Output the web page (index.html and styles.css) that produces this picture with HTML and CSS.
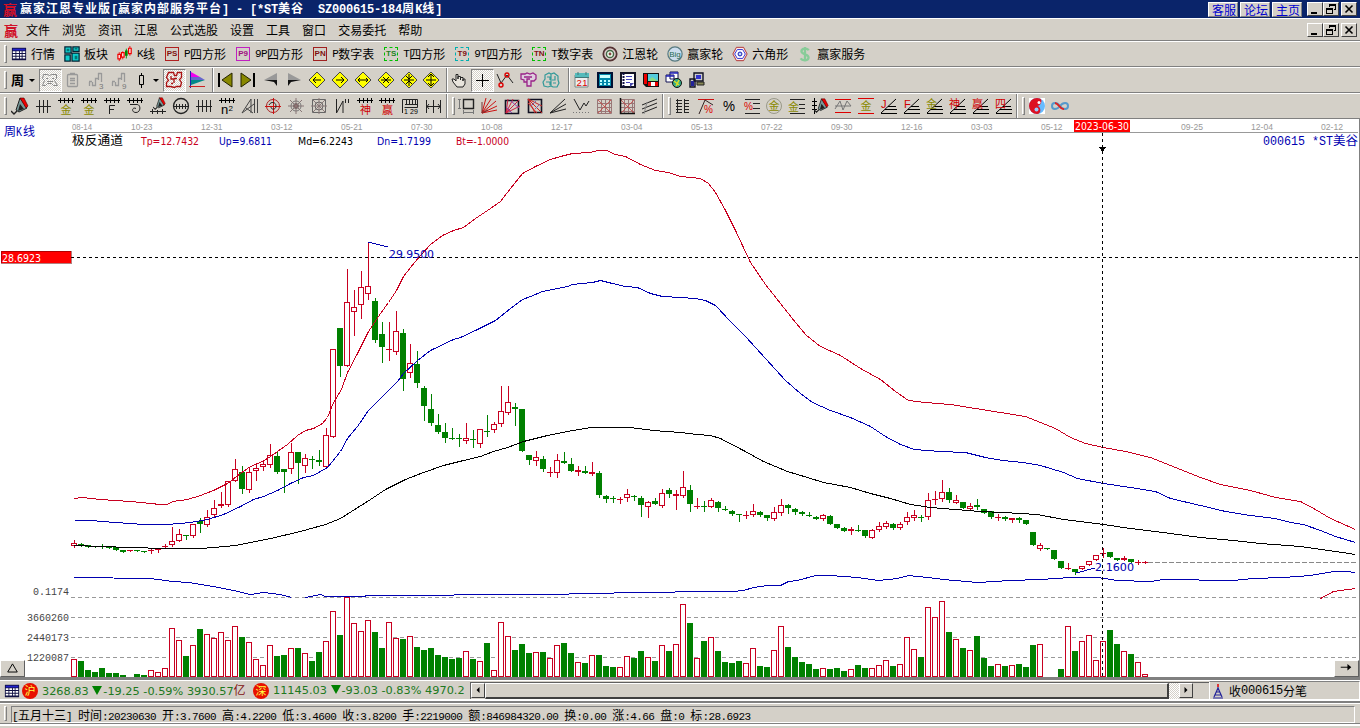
FILE: index.html
```html
<!DOCTYPE html>
<html lang="zh-CN">
  <head>
    <meta charset="utf-8" />
    <title>赢家江恩专业版</title>
    <link rel="stylesheet" href="styles.css">
  </head>
  <body>
    <svg class="defs" width="0" height="0">
      <!-- shapes shared by several toolbar buttons -->
      <symbol id="ticks" viewBox="0 0 18 18"><path d="M1 3.500h16M3.500 1v5M7.500 1v5M11.500 1v5M15.500 1v5" stroke="#000" fill="none"/></symbol>
      <symbol id="fan" viewBox="0 0 18 18"><path d="M1 16.500h16M5 12.500h12M8 9.500h8M1 16L16 2" stroke="#000" fill="none"/></symbol>
      <symbol id="diamond" viewBox="0 0 18 18"><path d="M9 1l8 8-8 8-8-8z" fill="#ff0" stroke="#444"/></symbol>
      <symbol id="pen" viewBox="0 0 18 18"><path d="M9 1L5 13l3 2 8-4z" fill="#799" stroke="#222"/><path d="M9 1h4l4 8-2 2z" fill="#e00" stroke="#400" stroke-width=".6"/><path d="M9 7l4 5-6 2z" fill="#222"/><path d="M0 14l3 3 3-3" stroke="#222" fill="none" stroke-width="1.400"/></symbol>
      <symbol id="grid" viewBox="0 0 18 18"><path d="M2.500 2.500h14v14h-14zM6.500 2v14M10.500 2v14M14.500 2v14M2 6.500h14M2 10.500h14M2 14.500h14" stroke="#977" fill="none"/><path d="M3 3l13 13M16 3L3 16" stroke="#c44" stroke-width=".8"/></symbol>
      <symbol id="table" viewBox="0 0 18 18"><path d="M1 2h16v14H1z" fill="#114"/><path d="M2 3h14v2H2z" fill="#22c"/><path d="M2 6h3v2H2zM6 6h3v2H6zM10 6h2v2h-2zM13 6h3v2h-3zM2 9h3v2H2zM6 9h3v2H6zM10 9h2v2h-2zM13 9h3v2h-3zM2 12h3v2H2zM6 12h3v2H6zM10 12h2v2h-2zM13 12h3v2h-3z" fill="#fff"/></symbol>
      <symbol id="steps" viewBox="0 0 18 18"><path d="M2.500 15v-4M5.500 11v4M8.500 7v6M11.500 2v7M14.500 2v9M2 10.500h3M5 14.500h3.500V7.500h3M11 2.500h3.500" fill="none" stroke="#999" stroke-width="1.300"/></symbol>
    </svg>

    <div class="titlebar">
      <span class="logo">赢</span>
      <span class="title">赢家江恩专业版<span>[</span>赢家内部服务平台<span>] - [*ST</span>美谷<span>  SZ000615-184</span>周<span>K</span>线<span>]</span></span>
      <div class="links"><a>客服</a><a>论坛</a><a>主页</a></div>
      <div class="winbtns">
        <b><svg viewBox="0 0 14 12"><path d="M3 9h6v2H3z"/></svg></b>
        <b><svg viewBox="0 0 14 12"><path d="M5 1h7v6h-2V6h1V3H6v1H5zM2 5h7v6H2zM3 7v3h5V7z" fill-rule="evenodd"/></svg></b>
        <b class="close"><svg viewBox="0 0 14 12"><path d="M3.500 2.500l7 7M10.500 2.500l-7 7" stroke="#000" stroke-width="1.600"/></svg></b>
      </div>
    </div>

    <div class="menubar">
      <span class="logo">赢</span>
      <span>文件</span><span>浏览</span><span>资讯</span><span>江恩</span><span>公式选股</span><span>设置</span><span>工具</span><span>窗口</span><span>交易委托</span><span>帮助</span>
      <div class="winbtns">
        <b><svg viewBox="0 0 14 12"><path d="M3 9h6v2H3z"/></svg></b>
        <b><svg viewBox="0 0 14 12"><path d="M5 1h7v6h-2V6h1V3H6v1H5zM2 5h7v6H2zM3 7v3h5V7z" fill-rule="evenodd"/></svg></b>
        <b class="close"><svg viewBox="0 0 14 12"><path d="M3.500 2.500l7 7M10.500 2.500l-7 7" stroke="#000" stroke-width="1.600"/></svg></b>
      </div>
    </div>

    <div class="toolbar labels">
      <i class="grip"></i>
      <div class="item"><svg viewBox="0 0 18 18"><use href="#table"/></svg>行情</div>
      <div class="item"><svg viewBox="0 0 18 18"><path d="M1 1h7v7H1zM10 1h7v5h-7zM1 10h6v7H1zM9 8h8v9H9z" fill="#1cc" stroke="#023" stroke-width="1.400"/><path d="M3 3h3v3H3zM12 11h3v4h-3zM12 2h3v2h-3z" fill="#077"/></svg>板块</div>
      <div class="item"><svg viewBox="0 0 18 18"><path d="M2.500 7v10M6.500 6v9M14.500 0v11" stroke="#e00"/><path d="M10.500 3v11" stroke="#080"/><path d="M1 9.500h3v5H1zM5 7.500h3v5H5zM13 2.500h3v6h-3z" fill="#fdd" stroke="#e00" stroke-width="1.300"/><path d="M9 5h3v6H9z" fill="#080"/></svg><span>K</span>线</div>
      <div class="item"><em class="sq ps">PS</em><span>P</span>四方形</div>
      <div class="item"><em class="sq p9">P9</em><span>9P</span>四方形</div>
      <div class="item"><em class="sq pn">PN</em><span>P</span>数字表</div>
      <div class="item"><em class="sq ts">TS</em><span>T</span>四方形</div>
      <div class="item"><em class="sq t9">T9</em><span>9T</span>四方形</div>
      <div class="item"><em class="sq tn">TN</em><span>T</span>数字表</div>
      <div class="item"><svg viewBox="0 0 18 18"><circle cx="9" cy="9" r="7.500" fill="#dcc" stroke="#533" stroke-width="2"/><circle cx="9" cy="9" r="4" fill="#efe" stroke="#464" stroke-width="1.600"/><circle cx="9" cy="9" r="1.600" fill="#844"/></svg>江恩轮</div>
      <div class="item"><svg viewBox="0 0 18 18"><circle cx="9" cy="9" r="8" fill="#cde" stroke="#587a80" stroke-width="1.400"/><text x="2.500" y="12.500" font-size="9" textLength="13" fill="#286a50">Big</text></svg>赢家轮</div>
      <div class="item"><svg viewBox="0 0 18 18"><path d="M5 1.500h8L17 9l-4 7.500H5L1 9z" fill="#fee" stroke="#a22"/><path d="M6 4h6l3 5-3 5H6L3 9z" fill="#fff" stroke="#22c"/><circle cx="9" cy="9" r="2.200" fill="#bdf" stroke="#00a"/></svg>六角形</div>
      <div class="item"><svg viewBox="0 0 18 18"><path d="M13 5C12 2 5 2 5 6s8 3 8 7-7 4-9 1M9 1v16" fill="none" stroke="#8c9" stroke-width="2.600"/></svg>赢家服务</div>
    </div>

    <div class="toolbar icons view">
      <i class="grip"></i>
      <span class="period">周</span><i class="drop"></i>
      <div class="btn on"><svg viewBox="0 0 18 18"><path d="M2.500 3.500h4l2 1 2-1h5v4l-2 2 3 5h-4l-2-2h-4l-2 2h-3l2-5-2-2zM5 7.500h2M11 7.500h2M6 10.500h6" fill="none" stroke="#888"/></svg></div>
      <div class="btn"><svg viewBox="0 0 18 18"><path d="M3.500 4.500q0-1 1-1h8q1 0 1 1v10q0 1-1 1h-8q-1 0-1-1zM6 2.500h5M6 7.500h5M6 9.500h5M6 12.500h5" fill="none" stroke="#999" stroke-width="1.300"/></svg></div>
      <div class="btn"><svg viewBox="0 0 18 18"><use href="#steps"/><text x="12" y="18" font-size="8" fill="#777">3</text></svg></div>
      <div class="btn"><svg viewBox="0 0 18 18"><use href="#steps"/><text x="12" y="18" font-size="8" fill="#777">9</text></svg></div>
      <div class="btn"><svg viewBox="0 0 18 18"><path d="M8.500 2v15" stroke="#000"/><path d="M6.500 4.500h4v9h-4z" fill="#d4d0c8" stroke="#000"/></svg></div><i class="drop tight"></i>
      <div class="btn on"><svg viewBox="0 0 18 18"><path d="M3.500 1.500h5l1 3h2l1-3h4v5l-2 2 2 3-1 4h-4l-2 1-4-1h-4v-4l2-2-2-3zM6 5v3h3v4M12 7.500H9M6 12.500h2" fill="none" stroke="#a11" stroke-width="1.300"/></svg></div>
      <div class="btn"><svg viewBox="0 0 18 18"><path d="M3 1l9 5H3z" fill="#e0e"/><path d="M3 6h9l5 3H3z" fill="#66c"/><path d="M3 9h14L3 14z" fill="#088"/><path d="M2.500 0v17" stroke="#22a"/><path d="M1 15.500h16" stroke="#c22"/></svg></div>
      <i class="sep"></i>
      <div class="btn"><svg viewBox="0 0 18 18"><path d="M2 2h2v14H2z"/><path d="M16 2v14L6 9z" fill="#880" stroke="#220"/></svg></div>
      <div class="btn"><svg viewBox="0 0 18 18"><path d="M14 2h2v14h-2z"/><path d="M2 2v14l10-7z" fill="#880" stroke="#220"/></svg></div>
      <div class="btn"><svg viewBox="0 0 18 18"><path d="M15 2v7H2z" fill="#999"/><path d="M15 15l-3-4-10-2h13z" fill="#111"/></svg></div>
      <div class="btn"><svg viewBox="0 0 18 18"><path d="M3 2v7h13z" fill="#999"/><path d="M3 15l3-4 10-2H3z" fill="#111"/></svg></div>
      <div class="btn"><svg viewBox="0 0 18 18"><use href="#diamond"/><path d="M5 9h8M8 6L5 9l3 3" stroke="#000" fill="none"/></svg></div>
      <div class="btn"><svg viewBox="0 0 18 18"><use href="#diamond"/><path d="M5 9h8M10 6l3 3-3 3" stroke="#000" fill="none"/></svg></div>
      <div class="btn"><svg viewBox="0 0 18 18"><use href="#diamond"/><path d="M4 9h10M6 7L4 9l2 2M12 7l2 2-2 2" stroke="#000" fill="none"/></svg></div>
      <div class="btn"><svg viewBox="0 0 18 18"><use href="#diamond"/><path d="M4 9h10M6 6l3 3-3 3M12 6L9 9l3 3" stroke="#000" fill="none"/></svg></div>
      <div class="btn"><svg viewBox="0 0 18 18"><use href="#diamond"/><path d="M9 3v12M4 9h10M6 5l3 3 3-3M6 13l3-3 3 3" stroke="#000" fill="none"/></svg></div>
      <div class="btn"><svg viewBox="0 0 18 18"><use href="#diamond"/><path d="M9 3v12M4 9h10M6 6l3-3 3 3M6 12l3 3 3-3" stroke="#000" fill="none"/></svg></div>
      <i class="sep"></i>
      <div class="btn"><svg viewBox="0 0 18 18"><path d="M7 16l-4-5-1-3 2 0 2 2V3.500h2V8 5.500h2.500V9 6.500H13V10 8h2v5l-2 3z" fill="#e8e4dc" stroke="#222"/></svg></div>
      <div class="btn on"><svg viewBox="0 0 18 18"><path d="M9.500 3v13M3 9.500h13" stroke="#000"/></svg></div>
      <div class="btn"><svg viewBox="0 0 18 18"><path d="M1 3l4 9 6-8 6 8" stroke="#222" fill="none"/><circle cx="5" cy="14" r="2" fill="none" stroke="#d00" stroke-width="1.400"/><circle cx="11" cy="4" r="2" fill="none" stroke="#d00" stroke-width="1.400"/></svg></div>
      <div class="btn"><svg viewBox="0 0 18 18"><path d="M2 3h4l2-1 3 1 3-1 3 2v4l-2 2h-3v5H8v-4H5V9L2 8zM5 6h8M11 8H8v3" fill="#dcd" stroke="#928" stroke-width="1.300"/></svg></div>
      <div class="btn"><svg viewBox="0 0 18 18"><path d="M3 4l4-2 2 1 3-1 4 3v4l1 3-2 4h-4l-2-1-3 1-4-1-1-4 2-3zM5 6h3v3M13 5v4h-3M4 11h4v3M11 12h3M9 3v12" fill="none" stroke="#399" stroke-width="1.200"/></svg></div>
      <i class="sep last"></i>
      <div class="btn"><svg viewBox="0 0 18 18"><path d="M2 4h13v12H2z" fill="#eee" stroke="#788"/><path d="M2 2h14v4H2z" fill="#5bb"/><path d="M2 6.500h14M5 1v3M13 1v3" stroke="#477"/><text x="3.500" y="15" font-size="9.500" textLength="11" fill="#d00">21</text></svg></div>
      <div class="btn"><svg viewBox="0 0 18 18"><path d="M2 2h14v14H2z" fill="#08a" stroke="#013" stroke-width="2"/><path d="M4 4h10v3H4z" fill="#cff"/><path d="M4 9h2v2H4zM8 9h2v2H8zM12 9h2v2h-2zM4 12h2v2H4zM8 12h2v2H8zM12 12h2v2h-2z" fill="#bff"/></svg></div>
      <div class="btn"><svg viewBox="0 0 18 18"><path d="M2 2h14v14H2z" fill="#fff" stroke="#112" stroke-width="2"/><path d="M4.500 2v14" stroke="#114" stroke-width="2" stroke-dasharray="2 1"/><path d="M7 5.500h6M7 8.500h6M7 11.500h4" stroke="#44b"/><path d="M11 16v-4h4z" fill="#44a"/></svg></div>
      <div class="btn"><svg viewBox="0 0 18 18"><path d="M1 2h16v14H4l-3-3z" fill="#111"/><path d="M2 3h3v10H2z" fill="#e00"/><path d="M6 3h10v7H6z" fill="#5cd"/><path d="M6 10h10l-6-4z" fill="#8d8"/><path d="M6 11h3v4H6zM13 11h3v4h-3z" fill="#e00"/><path d="M9 11h4v4H9z" fill="#fff"/></svg></div>
      <div class="btn"><svg viewBox="0 0 18 18"><path d="M5 1h8v7H5zM1 4h8v7H1z" fill="#fff" stroke="#115"/><path d="M5 2h8M1 5h8" stroke="#22b" stroke-width="1.500"/><circle cx="12" cy="12" r="4.500" fill="#3a8" stroke="#111"/><path d="M9 10l5 4M11 15l3-6" stroke="#dd2" stroke-width="1.500"/></svg></div>
      <div class="btn"><svg viewBox="0 0 18 18"><path d="M6 2h9v8H6zM2 8h5v8H2z" fill="#ccc" stroke="#112" stroke-width="1.400"/><path d="M8 4h5v4H8z" fill="#33c"/><path d="M3 10h3v5H3z" fill="#229"/><path d="M9 11h7v3H9z" fill="#885" stroke="#222"/></svg></div>
    </div>

    <div class="toolbar icons draw">
      <i class="grip"></i>
      <div class="btn"><svg viewBox="0 0 18 18"><use href="#pen"/></svg></div>
      <div class="btn"><svg viewBox="0 0 18 18"><path d="M2 9.500h15M5.500 3v13M9.500 3v13M13.500 3v13" stroke="#222"/></svg></div>
      <div class="btn"><svg viewBox="0 0 18 18"><use href="#ticks"/><text class="gold" x="3.500" y="17">金</text></svg></div>
      <div class="btn"><svg viewBox="0 0 18 18"><use href="#ticks"/><text class="gold" x="3.500" y="17">金</text></svg></div>
      <div class="btn"><svg viewBox="0 0 18 18"><use href="#ticks"/><path d="M6.500 17V8.500H12M6 12.500h5" fill="none" stroke="#222"/></svg></div>
      <div class="btn"><svg viewBox="0 0 18 18"><use href="#ticks"/><path d="M4 7.500h7c4 0 4 8-1 8s-4-6 0-4" fill="none" stroke="#222"/></svg></div>
      <div class="btn"><svg viewBox="0 0 18 18"><use href="#pen" x="4" width="13" height="13"/><path d="M1 14.500h16M3.500 12v5M8.500 13v4M13.500 12v5" stroke="#222"/></svg></div>
      <div class="btn"><svg viewBox="0 0 18 18"><circle cx="9" cy="9" r="7.500" fill="none" stroke="#222" stroke-width="1.300"/><path d="M1 9.500h16M4.500 7v5M7.500 7v5M10.500 7v5M13.500 7v5" stroke="#222"/></svg></div>
      <div class="btn"><svg viewBox="0 0 18 18"><path d="M1 9.500h16M3.500 3v12M7.500 3v12M11.500 3v12M15.500 3v12" stroke="#222"/></svg></div>
      <div class="btn"><svg viewBox="0 0 18 18"><use href="#ticks"/><text x="3" y="17" font-size="13">n</text><text x="10.500" y="14" font-size="8">2</text></svg></div>
      <div class="btn"><svg viewBox="0 0 18 18"><path d="M1 16L10 2v14M1 16l12-9M5 11l7 5M13.500 2v14M16.500 2v14" fill="none" stroke="#444"/></svg></div>
      <div class="btn"><svg viewBox="0 0 18 18"><circle cx="9" cy="9" r="6.500" fill="none" stroke="#a22"/><path d="M9.500 1v16M1 9.500h16" stroke="#c11"/><path d="M5 8c2-4 7-3 7 1s-5 4-5 1" fill="none" stroke="#222"/></svg></div>
      <div class="btn"><svg viewBox="0 0 18 18"><circle cx="9" cy="9" r="5" fill="none" stroke="#777"/><circle cx="9" cy="9" r="2.500" fill="#855" stroke="#666"/><path d="M9 1v16M1 9h16M3 3l12 12M15 3L3 15" stroke="#877"/></svg></div>
      <div class="btn"><svg viewBox="0 0 18 18"><path d="M2.500 2.500h13v13h-13z" fill="none" stroke="#666"/><circle cx="9" cy="9" r="4" fill="none" stroke="#666"/><path d="M9 1v16M1 9h16M3 3l12 12M15 3L3 15" stroke="#877"/></svg></div>
      <div class="btn"><svg viewBox="0 0 18 18"><path d="M3.500 2v14L10 4v12M12.500 2v4M15.500 2v4" fill="none" stroke="#222"/></svg></div>
      <div class="btn"><svg viewBox="0 0 18 18"><use href="#ticks"/><text class="red" x="4" y="17">神</text></svg></div>
      <div class="btn"><svg viewBox="0 0 18 18"><use href="#ticks"/><text class="red" x="4" y="17">赢</text></svg></div>
      <div class="btn"><svg viewBox="0 0 18 18"><path d="M1.500 16V2.500h15v8h-13M4 7.500h13M5.500 3v4M8.500 3v4M11.500 3v4M14.500 3v4" fill="none" stroke="#222"/><text x="3" y="17" font-size="7" textLength="14">1 29</text></svg></div>
      <div class="btn"><svg viewBox="0 0 18 18"><path d="M2.500 3v13M9.500 3v13M16.500 3v13M2 9.500h14M5 7L3 9.500 5 12M14 7l2 2.500-2 2.500" fill="none" stroke="#222"/></svg></div>
      <i class="sep"></i><i class="grip"></i>
      <div class="btn"><svg viewBox="0 0 18 18"><path d="M6.500 2.500h10v9h-10z" fill="none" stroke="#222" stroke-width="1.400"/><path d="M2.500 2v10M1 2.500h3M1 11.500h3M6 15.500h10M6.500 13v4M16.500 13v4" stroke="#777"/></svg></div>
      <div class="btn"><svg viewBox="0 0 18 18"><path d="M2 16L6 1M2 16L11 2M2 16L16 4M2 16l15-7M2 16l15-3" stroke="#c11" fill="none"/><path d="M2 16V5M2 16l6-3" stroke="#733"/></svg></div>
      <div class="btn"><svg viewBox="0 0 18 18"><path d="M2.500 3.500h13v13h-13z" fill="none" stroke="#112" stroke-width="1.600"/><path d="M3 16L5 2M3 16L10 2M3 16L16 3M3 16l14-7" stroke="#c24"/><path d="M3 10l6 6M8 4l8 7" stroke="#84a"/></svg></div>
      <div class="btn"><svg viewBox="0 0 18 18"><path d="M2.500 2.500h13v13h-13z" fill="none" stroke="#112" stroke-width="1.600"/><path d="M2 2l14 14M2 2l7 14M2 2l14 7M2 6l9 10" stroke="#c22"/><path d="M5 9l5-5M9 12l5-5" stroke="#76a"/></svg></div>
      <div class="btn"><svg viewBox="0 0 18 18"><path d="M1 16L16 2M1 16l16-9M1 16l16-4" stroke="#222"/></svg></div>
      <div class="btn"><svg viewBox="0 0 18 18"><path d="M2 2l6 11 4-7 2 3 3-5" fill="none" stroke="#222"/><path d="M1 15.500h16" stroke="#777" stroke-dasharray="1 2"/></svg></div>
      <div class="btn"><svg viewBox="0 0 18 18"><use href="#grid"/></svg></div>
      <div class="btn"><svg viewBox="0 0 18 18"><use href="#grid"/><path d="M2.500 1v15.500H17" fill="none" stroke="#111" stroke-width="1.500"/></svg></div>
      <div class="btn"><svg viewBox="0 0 18 18"><path d="M1 8l15-6M1 12l15-6M1 16l15-6" stroke="#222"/><path d="M3 17l3-12" stroke="#888"/></svg></div>
      <i class="sep"></i><i class="grip"></i>
      <div class="btn"><svg viewBox="0 0 18 18"><path d="M3.500 2v14M10.500 2v14M2 3.500h6M2 6.500h6M2 9.500h6M2 12.500h6M2 15.500h6M10 3.500h5M10 6.500h5M10 9.500h5M10 12.500h5M10 15.500h5" stroke="#222"/></svg></div>
      <div class="btn"><svg viewBox="0 0 18 18"><path d="M1 2.500h16" stroke="#c11"/><path d="M2 17L8 3l8 5" fill="none" stroke="#322"/><text x="7" y="16" font-size="10" fill="#d00">%</text></svg></div>
      <div class="btn"><svg viewBox="0 0 18 18"><text x="3" y="14" font-size="14" textLength="12" lengthAdjust="spacingAndGlyphs">%</text></svg></div>
      <div class="btn"><svg viewBox="0 0 18 18"><path d="M2 2.500h15M10 6.500h7M10 11.500h7M2 16.500h15" stroke="#222"/><text x="1" y="13" font-size="10" fill="#d00">%</text></svg></div>
      <div class="btn"><svg viewBox="0 0 18 18"><circle cx="9" cy="9" r="7.500" fill="none" stroke="#998"/><text class="gold" x="3.500" y="13">金</text></svg></div>
      <div class="btn"><svg viewBox="0 0 18 18"><path d="M2 2.500h15M11 7.500h6M11 11.500h6M2 16.500h15" stroke="#222"/><text class="gold" x="0" y="14">金</text></svg></div>
      <div class="btn"><svg viewBox="0 0 18 18"><path d="M3.500 1v16M1 4.500h5M1 8.500h5M1 12.500h5" stroke="#000"/><use href="#pen" x="3" y="1" width="15" height="15"/></svg></div>
      <div class="btn"><svg viewBox="0 0 18 18"><path d="M1 2.500h16M1 15.500h16" stroke="#d00"/><path d="M1 12l5-8 3 9 4-9 4 5M1 9h16" fill="none" stroke="#777"/></svg></div>
      <div class="btn"><svg viewBox="0 0 18 18"><path d="M1 1.500h16M1 16.500h16" stroke="#d00"/><text class="gold" x="3.500" y="13">金</text></svg></div>
      <div class="btn"><svg viewBox="0 0 18 18"><use href="#fan"/><text class="red" x="1" y="11">J</text></svg></div>
      <div class="btn"><svg viewBox="0 0 18 18"><use href="#fan"/><text class="red" x="1" y="11">F</text></svg></div>
      <div class="btn"><svg viewBox="0 0 18 18"><use href="#fan"/><text class="gold" x="0" y="11">金</text></svg></div>
      <div class="btn"><svg viewBox="0 0 18 18"><use href="#fan"/><text class="red" x="0" y="11">神</text></svg></div>
      <div class="btn"><svg viewBox="0 0 18 18"><use href="#fan"/><text class="red" x="0" y="11">赢</text></svg></div>
      <div class="btn"><svg viewBox="0 0 18 18"><use href="#fan"/><text class="red" x="0" y="11">四</text></svg></div>
      <i class="sep"></i><i class="grip"></i>
      <div class="btn"><svg viewBox="0 0 18 18"><path d="M1 1h16v16H1z" fill="#fff"/><circle cx="9" cy="9" r="8" fill="#6bf"/><path d="M9 1a8 8 0 000 16c5 0 4-8 0-8 4 0 6-6 3-7.500z" fill="#d12"/><circle cx="11" cy="5.500" r="1.500" fill="#fff"/><circle cx="8.500" cy="12.500" r="2" fill="#9cf"/></svg></div>
      <div class="btn"><svg viewBox="0 0 18 18"><path d="M9 9C6 5 1 5 1 9s5 4 8 0 8-4 8 0-5 4-8 0" fill="none" stroke="#59c" stroke-width="2"/><path d="M4 6c4 0 5 7 9 6" fill="none" stroke="#d22" stroke-width="2"/></svg></div>
    </div>

    <div class="chart">
      <svg id="plot" viewBox="0 119 1360 558" width="1360" height="558"></svg>
      <button class="corner left"><svg viewBox="0 0 24 16"><path d="M7 11.500L12 3l5 8.500z" fill="none" stroke="#000"/></svg></button>
      <button class="corner right"><svg viewBox="0 0 24 16"><path d="M6 6.500h10" stroke="#000"/><path d="M13 3l4 3.500-4 3.500z"/></svg></button>
    </div>

    <div class="quotes">
      <svg class="mini" viewBox="0 0 18 18"><use href="#table"/></svg>
      <span class="dot">沪</span>
      <span class="q sh">3268.83 <i class="down"></i>-19.25 -0.59% 3930.57<em>亿</em></span>
      <span class="dot">深</span>
      <span class="q">11145.03 <i class="down"></i>-93.03 -0.83% 4970.2</span>
      <div class="scroll">
        <b class="arrow"><svg viewBox="0 0 12 12"><path d="M7.500 3v6L4.500 6z"/></svg></b>
        <div class="thumb"></div>
        <div class="track"></div>
        <b class="arrow"><svg viewBox="0 0 12 12"><path d="M4.500 3v6l3-3z"/></svg></b>
      </div>
      <div class="feed">
        <svg viewBox="0 0 12 16"><path d="M6 3v3M6 5L2 14M6 5l4 9M4 9h4M3 12h6M1 15h10" fill="none" stroke="#229" stroke-width="1.200"/><path d="M5 1h2v3H5z" fill="#d33"/></svg>
        收<span>000615</span>分笔
      </div>
    </div>

    <div class="status">
      <i class="grip"></i>
      <div class="pane"><span>[</span>五月十三<span>] </span>时间<span>:20230630 </span>开<span>:3.7600 </span>高<span>:4.2200 </span>低<span>:3.4600 </span>收<span>:3.8200 </span>手<span>:2219000 </span>额<span>:846984320.00 </span>换<span>:0.00 </span>涨<span>:4.66 </span>盘<span>:0 </span>标<span>:28.6923</span></div>
    </div>

    <script src="chart.js"></script>
  </body>
</html>
```

FILE: styles.css
```css
* {
  box-sizing: border-box;
}
body {
  margin: 0;
  width: 1360px;
  height: 728px;
  overflow: hidden;
  background: #d4d0c8;
  font: 12px/16px "Noto Sans CJK SC", sans-serif;
  color: #000;
  display: flex;
  flex-direction: column;
}
svg {
  display: block;
}
.defs {
  position: absolute;
}
svg text {
  font-family: "Liberation Sans", "Noto Sans CJK SC", sans-serif;
}

/* half-width latin runs, 6px per character */
.item span,
.pane span,
.feed span {
  font-family: "Liberation Mono", monospace;
  font-size: 11px;
  letter-spacing: -0.6px;
  white-space: pre;
}

/* title + menu */
.titlebar {
  height: 18px;
  flex: none;
  background: #0a246a;
  color: #fff;
  display: flex;
  align-items: center;
}
.logo {
  width: 14px;
  margin: 0 3px;
  font-size: 14px;
  font-weight: bold;
  color: #d01028;
}
.title {
  font-weight: bold;
  letter-spacing: 1px;
  white-space: pre;
}
.title span {
  font-family: "Liberation Mono", monospace;
  letter-spacing: -0.2px;
}
.links {
  margin-left: auto;
  display: flex;
  gap: 2px;
}
.links a {
  width: 30px;
  height: 15px;
  line-height: 14px;
  padding-left: 3px;
  background: #d4d0c8;
  border: 1px solid;
  border-color: #fff #808080 #808080 #fff;
  color: #0000d0;
}
.winbtns {
  display: flex;
  margin: 0 3px 0 5px;
}
.winbtns b {
  width: 16px;
  height: 14px;
  background: #d4d0c8;
  border: 1px solid;
  border-color: #fff #404040 #404040 #fff;
}
.winbtns .close {
  margin-left: 2px;
}
.menubar {
  height: 23px;
  flex: none;
  border-top: 1px solid #fff;
  border-bottom: 1px solid #808080;
  display: flex;
  align-items: center;
}
.menubar > span + span {
  margin-right: 12px;
}
.menubar .logo {
  margin: 0 5px 0 4px;
  width: 17px;
}
.menubar .winbtns {
  margin-left: auto;
}

/* toolbars */
.toolbar {
  height: 26px;
  flex: none;
  border-top: 1px solid #fff;
  border-bottom: 1px solid #808080;
  display: flex;
  align-items: center;
}
.grip {
  width: 3px;
  height: 18px;
  margin: 0 1px 0 4px;
  flex: none;
  border: 1px solid;
  border-color: #fff #808080 #808080 #fff;
}
.labels {
  gap: 9px;
}
.labels .grip {
  margin: 0 -6px 0 4px;
}
.labels .grip + .item {
  margin-left: 1px;
}
.item {
  display: flex;
  align-items: center;
  white-space: nowrap;
}
.item svg,
.item .sq {
  width: 16px;
  height: 16px;
  margin-right: 4px;
}
.item .sq {
  width: 14px;
  height: 14px;
  margin: 0 5px 0 1px;
  border: 1px solid;
  font: bold 8px/12px "Liberation Sans", sans-serif;
  text-align: center;
  color: #801010;
}
.item .ps { border-color: #b02020; }
.item .p9 { border-color: #c020c0; color: #a01080; }
.item .pn { border-color: #a02020; }
.item .ts { border: 1px dashed #00c000; color: #208020; }
.item .t9 { border: 1px dashed #00b0b0; }
.item .tn { border: 1px dashed #00c000; }

.btn {
  width: 22.950px;
  height: 23px;
  flex: none;
  display: flex;
  align-items: center;
  justify-content: center;
}
.btn svg {
  width: 18px;
  height: 18px;
  overflow: visible;
}
.btn.on {
  border: 1px solid;
  border-color: #808080 #fff #fff #808080;
  background: repeating-conic-gradient(#fff 0 25%, #d4d0c8 0 50%) 0 0 / 2px 2px;
}
.period {
  font-weight: bold;
  width: 16px;
  margin-left: 3px;
  font-size: 13px;
}
.drop {
  width: 0;
  height: 0;
  border: 3px solid transparent;
  border-top-color: #000;
  border-bottom: 0;
  margin: 0 4px 0 2px;
}
.drop.tight {
  margin: 0 4px 0 -1px;
}
.sep {
  width: 2px;
  height: 24px;
  flex: none;
  margin: 0 0 0 3px;
  border-left: 1px solid #808080;
  border-right: 1px solid #fff;
}
.view .last {
  margin: 0 1px 0 5px;
}
.draw .grip {
  margin-right: 0;
}
.draw .grip:first-child {
  margin-right: 2px;
}
.draw .sep {
  margin: 0 0 0 1px;
}
.draw .sep + .grip {
  margin-left: 4px;
}
.gold {
  fill: #8a8a00;
  font-size: 11px;
}
.red {
  fill: #d00000;
  font-size: 11px;
}

/* chart */
.chart {
  position: relative;
  height: 558px;
  flex: none;
  background: #fff;
  border-right: 1px solid #808080;
}
.corner {
  position: absolute;
  bottom: 0;
  width: 25px;
  height: 17px;
  padding: 0;
  background: #d4d0c8;
  border: 1px solid;
  border-color: #fff #606060 #606060 #fff;
}
.corner.left { left: 0; }
.corner.right { right: 0; }

#plot path,
#plot line,
#plot rect,
#plot polyline {
  shape-rendering: crispEdges;
}
#plot .band {
  fill: none;
  stroke-width: 1;
}
#plot .date {
  font: 9.500px "Liberation Sans Narrow", "Liberation Sans", sans-serif;
  fill: #999;
}
#plot .tag {
  font: 11px "DejaVu Sans Condensed", "DejaVu Sans", sans-serif;
}
#plot .num {
  font: 11px "Liberation Mono", monospace;
  fill: #444;
}
#plot .cjk {
  font: 12px "Noto Sans CJK SC", sans-serif;
}
#plot .mono {
  font: 12px "Liberation Mono", monospace;
}

/* quote strip */
.quotes {
  height: 26px;
  flex: none;
  border-top: 3px solid #808080;
  border-bottom: 2px solid #808080;
  box-shadow: inset 0 1px #fff, inset 0 -2px #fff;
  display: flex;
  align-items: center;
  padding-left: 4px;
}
.mini {
  width: 16px;
  height: 16px;
}
.dot {
  width: 16px;
  height: 16px;
  margin: 0 4px 0 2px;
  border-radius: 50%;
  background: #e81000;
  color: #ff4;
  font-size: 11px;
  line-height: 15px;
  text-align: center;
}
.q {
  font: 11.300px/16px "DejaVu Sans", sans-serif;
  color: #207820;
  white-space: pre;
}
.q em {
  font: 12px "Noto Sans CJK SC", sans-serif;
  color: #801010;
}
.sh {
  width: 207px;
}
.q + .dot {
  margin-left: 4px;
}
.down {
  display: inline-block;
  border: 5.500px solid transparent;
  border-top: 9px solid #008000;
  border-bottom: 0;
  margin-right: 1px;
}
.scroll {
  margin-left: auto;
  width: 739px;
  height: 17px;
  flex: none;
  display: flex;
  border-top: 1px solid #606060;
  border-left: 1px solid #606060;
}
.arrow,
.thumb {
  background: #d4d0c8;
  border: 1px solid;
  border-color: #fff #404040 #404040 #fff;
}
.arrow {
  width: 14px;
  height: 15px;
}
.thumb {
  width: 684px;
  border-width: 1px 2px 2px 1px;
}
.track {
  width: 10px;
  background: repeating-conic-gradient(#fff 0 25%, #d4d0c8 0 50%) 0 0 / 2px 2px;
}
.feed {
  width: 151px;
  height: 19px;
  flex: none;
  border: 1px solid;
  border-color: #808080 #fff #fff #fff;
  display: flex;
  align-items: center;
  padding-left: 2px;
}
.feed svg {
  width: 12px;
  height: 16px;
  margin-right: 5px;
}
.feed span {
  font-size: 12px;
  letter-spacing: -0.2px;
}

/* status line */
.status {
  height: 21px;
  flex: none;
  display: flex;
  align-items: center;
  border-top: 1px solid #fff;
  border-bottom: 1px solid #808080;
  box-shadow: 0 2px #fff;
}
.status .grip {
  height: 15px;
}
.pane {
  flex: 1;
  height: 17px;
  margin: 1px 5px 0 3px;
  border: 1px solid;
  border-color: #808080 #fff #fff #808080;
  line-height: 15px;
  white-space: nowrap;
}
```

FILE: chart.js
```js
const NS = "http://www.w3.org/2000/svg";
const plot = document.getElementById("plot");
const RED = "#c80020", GREEN = "#008000", BLUE = "#0000b0", BASE = 677;

function add(tag, attrs, text) {
  const el = document.createElementNS(NS, tag);
  for (const k in attrs) el.setAttribute(k, attrs[k]);
  if (text !== undefined) el.textContent = text;
  plot.appendChild(el);
  return el;
}
function label(cls, x, y, text, width, fill) {
  const a = { class: cls, x: x, y: y, textLength: width, lengthAdjust: "spacingAndGlyphs" };
  if (fill) a.style = "fill:" + fill;
  add("text", a, text);
}
function line(x1, y1, x2, y2, stroke, dash) {
  const a = { x1, y1, x2, y2, stroke };
  if (dash) a["stroke-dasharray"] = dash;
  add("line", a);
}

// one entry per week: colour, high, body top, body bottom, low, volume top (0 = none)
const weeks = `r540,543,546,547,659 g543,544,546,546,661 g545,545,547,547,670 g546,546,547,547,672 g544,546,547,548,668
g546,547,548,548,673 g547,547,550,550,673 g550,550,552,552,675 r550,550,551,551,0 g550,550,551,551,674
g551,551,552,552,675 r548,550,551,553,670 r549,549,550,552,672 r544,546,547,548,668 r527,541,545,546,628
r529,534,541,541,640 g535,535,536,539,656 r524,524,536,537,645 g518,521,524,532,629 r510,517,525,526,634
r500,508,515,517,638 r492,504,506,507,632 r481,481,505,506,640 r459,469,481,481,626 g466,472,489,493,637
r467,472,490,492,642 r465,468,471,480,659 r460,464,467,470,665 r444,455,465,467,645 g451,456,472,473,656
g469,469,472,492,655 r443,452,469,473,648 g452,452,463,483,648 r454,458,466,472,653 g456,459,460,468,661
g450,460,462,465,652 r428,435,467,467,641 r349,349,437,437,611 g328,328,366,376,635 r269,302,366,366,597
r290,307,312,335,623 r271,287,305,318,631 r242,286,294,299,620 g298,301,340,342,632 g322,334,347,362,648
r322,349,350,360,622 r311,331,352,354,638 g329,333,379,390,639 r344,363,373,377,636 g351,364,383,387,647
g386,388,406,420,650 g394,409,423,425,648 g414,425,432,433,655 g423,432,438,442,657 g428,438,439,439,659
g434,438,439,446,658 r423,438,441,443,651 g430,439,440,447,659 r429,429,444,447,661 g415,431,432,436,643
r422,424,430,432,670 r386,411,424,426,622 r386,402,413,414,636 g403,407,409,425,650 g409,409,451,451,644
g455,455,460,464,653 r451,457,461,465,652 g456,459,469,471,652 r467,472,473,476,658 r454,460,473,477,645
g452,461,463,463,643 g458,464,471,471,653 r466,470,472,475,662 g466,471,473,473,663 r462,472,474,475,655
g471,473,495,497,655 g495,496,499,502,666 g496,498,499,502,667 r497,499,500,503,667 r489,494,498,501,656
g495,496,497,500,658 g496,498,505,516,651 r501,502,507,517,657 g498,501,504,504,661 r489,493,506,507,645
g488,490,494,497,651 r490,494,496,509,644 r471,487,496,497,604 g485,490,504,511,623 r498,506,507,508,658
g501,506,507,511,641 r498,500,507,507,637 g501,502,508,511,651 g506,509,510,510,662 g510,511,514,515,663
g514,514,515,521,661 r511,515,516,518,663 r504,511,515,516,648 g511,512,515,516,666 g515,515,518,520,667
r507,512,519,520,650 r499,505,513,515,626 g504,505,508,513,647 g508,509,512,514,657 g511,512,514,515,662
g512,515,516,516,664 g516,517,519,519,669 r514,515,519,520,668 g515,516,524,524,669 g524,524,528,528,668
g527,528,531,531,671 r527,529,531,534,669 g525,530,531,531,665 g530,530,536,537,668 r529,530,538,538,668
r522,526,530,531,665 r521,523,527,528,660 g523,524,528,529,666 r522,524,528,529,664 r512,517,522,524,637
r510,515,518,520,649 g515,517,518,521,657 r493,500,517,519,607 r491,499,500,504,617 r480,492,499,501,601
g488,492,500,502,632 r495,500,503,503,639 g502,502,508,508,648 r503,506,509,510,650 g499,505,507,509,636
g509,509,513,513,658 g511,511,517,518,666 r514,517,518,520,664 g516,517,519,520,666 r518,518,520,522,665
g517,518,520,522,664 g520,520,524,524,667 g532,532,545,545,645 r543,545,549,550,644 g548,548,549,549,0
g550,550,559,559,0 g561,561,568,568,669 r563,568,569,569,626 g569,569,572,574,651 r566,566,569,569,641
r561,561,565,565,635 r555,555,560,560,660 r548,553,554,557,641 g552,552,557,557,630 g558,558,560,560,644
r556,558,560,560,651 g559,559,562,562,654 r560,562,563,564,662 r561,562,563,563,674`.split(/\s+/);

// price bands
const bands = [
  [RED, "74,498 82,497 100,499 130,501 160,504 167,504 172,501 187,499 200,495 213,490 227,483 240,473 250,466 262,461 270,456 277,451 287,444 297,435 305,430 313,428 322,423 327,417 333,402 341,389 347,372 357,353 368,331 380,313 388,302 396,290 403,276 410,267 420,255 430,244 442,235 453,230 463,227 475,218 490,208 500,201 510,188 522,173 535,166 550,159 560,156 572,153 590,152 597,150 606,150 615,154 625,156 640,164 655,170 668,172 680,176 700,178 708,183 715,192 725,210 735,230 750,262 765,284 780,303 795,322 806,335 820,346 840,355 860,368 880,379 895,391 908,400 925,402 950,404 975,408 1000,412 1025,416 1045,424 1055,428 1070,437 1085,443 1103,447 1125,451 1150,457 1175,467 1200,477 1220,484 1250,490 1275,497 1300,501 1315,509 1330,518 1355,529"],
  [BLUE, "74,520 90,520 115,522 143,524 167,524 190,522 207,519 223,514 240,506 253,499 263,496 277,490 290,483 303,477 313,475 327,467 340,451 347,438 357,426 368,410 380,398 397,381 403,373 417,360 430,350 453,339 460,337 477,329 495,320 510,308 522,299 530,296 542,291 567,286 572,284 592,282 600,280 612,283 625,286 637,287 650,293 662,296 680,297 695,298 705,300 715,305 730,321 745,336 765,358 785,380 800,393 812,402 830,410 850,417 870,426 885,436 900,444 914,449 940,451 965,452 985,457 1002,460 1023,462 1040,465 1063,472 1077,478 1103,483 1130,487 1155,491 1170,498 1200,505 1225,511 1250,515 1275,518 1290,522 1303,524 1320,530 1335,536 1355,542"],
  ["#000", "74,545 100,546 130,547 165,548 200,548 213,547 235,545 250,542 270,538 300,531 325,524 340,518 370,499 385,489 405,479 423,472 443,465 463,460 480,456 493,451 507,447 523,441 547,435 567,431 590,427 630,427 653,430 680,432 697,434 710,435 720,438 743,450 763,461 787,471 807,477 823,482 850,487 870,493 890,498 910,504 930,507 980,511 1003,512 1037,514 1063,519 1103,524 1130,528 1170,533 1200,537 1233,540 1260,543 1300,546 1335,551 1355,554"],
  [BLUE, "74,577 150,578 172,581 188,582 213,586 233,590 250,594 263,592 280,594 291,597"],
  [BLUE, "305,597 320,594 325,596 363,596 367,595 447,595 460,594 528,594 610,593 617,592 733,591 743,590 753,587 767,585 780,585 788,581 797,580 815,575 830,575 857,577 878,580 897,578 908,575 927,577 943,579 977,582 1010,580 1040,579 1070,577 1097,577 1117,580 1150,581 1163,579 1233,580 1253,578 1283,577 1310,575 1333,571 1345,571 1355,572"],
  [RED, "1320,598 1333,591 1340,590 1355,588"]
];

// date axis
line(71, 132.5, 1358, 132.5, "#999");
["08-14", "10-23", "12-31", "03-12", "05-21", "07-30", "10-08", "12-17", "03-04", "05-13", "07-22", "09-30", "12-16", "03-03", "05-12"]
  .forEach((d, i) => label("date", i ? 61 + i * 70 : 72, 130, d, i ? 21.5 : 20));
["09-25", "12-04", "02-12"].forEach((d, i) => label("date", 1181 + i * 70, 130, d, 22));
add("rect", { x: 1074, y: 120, width: 56, height: 12, fill: "#f00" });
label("tag", 1075, 130, "2023-06-30", 54, "#fff");

// horizontal guides
[[597.5, "0.1174", 33, 595], [617.5, "3660260", 27, 621], [637.5, "2440173", 27, 641], [657.5, "1220087", 27, 661]].forEach(g => {
  line(71, g[0], 1358, g[0], "#999", "4 3");
  label("num", g[2], g[3], g[1], 69 - g[2]);
});

weeks.forEach((w, i) => {
  const x = 74 + i * 7, up = w[0] === "r", col = up ? RED : GREEN;
  const [hi, top, bot, lo, vol] = w.slice(1).split(",").map(Number);
  const wick = (a, b) => { if (b > a) line(x + 0.5, a, x + 0.5, b, col); };
  wick(hi, top);
  wick(bot, lo + 1);
  if (up && bot - top > 2) add("rect", { x: x - 2.5, y: top + 0.5, width: 5, height: bot - top - 1, fill: "#fff", stroke: col });
  else add("rect", { x: x - 3, y: top, width: 6, height: Math.max(1, bot - top), fill: col });
  if (vol) {
    if (up) add("rect", { x: x - 2.5, y: vol + 0.5, width: 5, height: Math.max(1, BASE - vol - 1), fill: "#fff", stroke: col });
    else add("rect", { x: x - 3, y: vol, width: 6, height: BASE - vol, fill: col });
  }
});

bands.forEach(b => add("polyline", { class: "band", stroke: b[0], points: b[1], transform: "translate(.5 .5)" }));
line(1148, 562.5, 1358, 562.5, "#888", "5 2");

// crosshair
line(71, 257.5, 1358, 257.5, "#000", "3 3");
line(1102.5, 133, 1102.5, 677, "#000", "3 3");
add("path", { d: "M1099 147h7l-3.500 5z", fill: "#000" });
add("rect", { x: 1, y: 251, width: 70, height: 12, fill: "#f00", stroke: "#600", "stroke-width": 0.5 });
label("tag", 2, 262, "28.6923", 39, "#fff");

// high and low marks
add("polyline", { class: "band", stroke: BLUE, points: "368,242 388,247" });
label("tag", 389, 258, "29.9500", 45, BLUE);
add("polyline", { class: "band", stroke: BLUE, points: "1076,573 1095,568" });
label("tag", 1095, 571, "2.1600", 39, BLUE);

// legend
label("cjk", 4, 136, "周", 12, BLUE);
label("mono", 16, 136, "K", 6, BLUE);
label("cjk", 23, 136, "线", 12, BLUE);
label("cjk", 72, 145, "极反通道", 51);
label("tag", 141, 145, "Tp=12.7432", 58, RED);
label("tag", 219, 145, "Up=9.6811", 53, BLUE);
label("tag", 298, 145, "Md=6.2243", 55);
label("tag", 377, 145, "Dn=1.7199", 54, BLUE);
label("tag", 456, 145, "Bt=-1.0000", 53, RED);
label("mono", 1263, 145, "000615", 42, BLUE);
label("mono", 1312, 145, "*ST", 21, BLUE);
label("cjk", 1333, 145, "美谷", 25, BLUE);
```
